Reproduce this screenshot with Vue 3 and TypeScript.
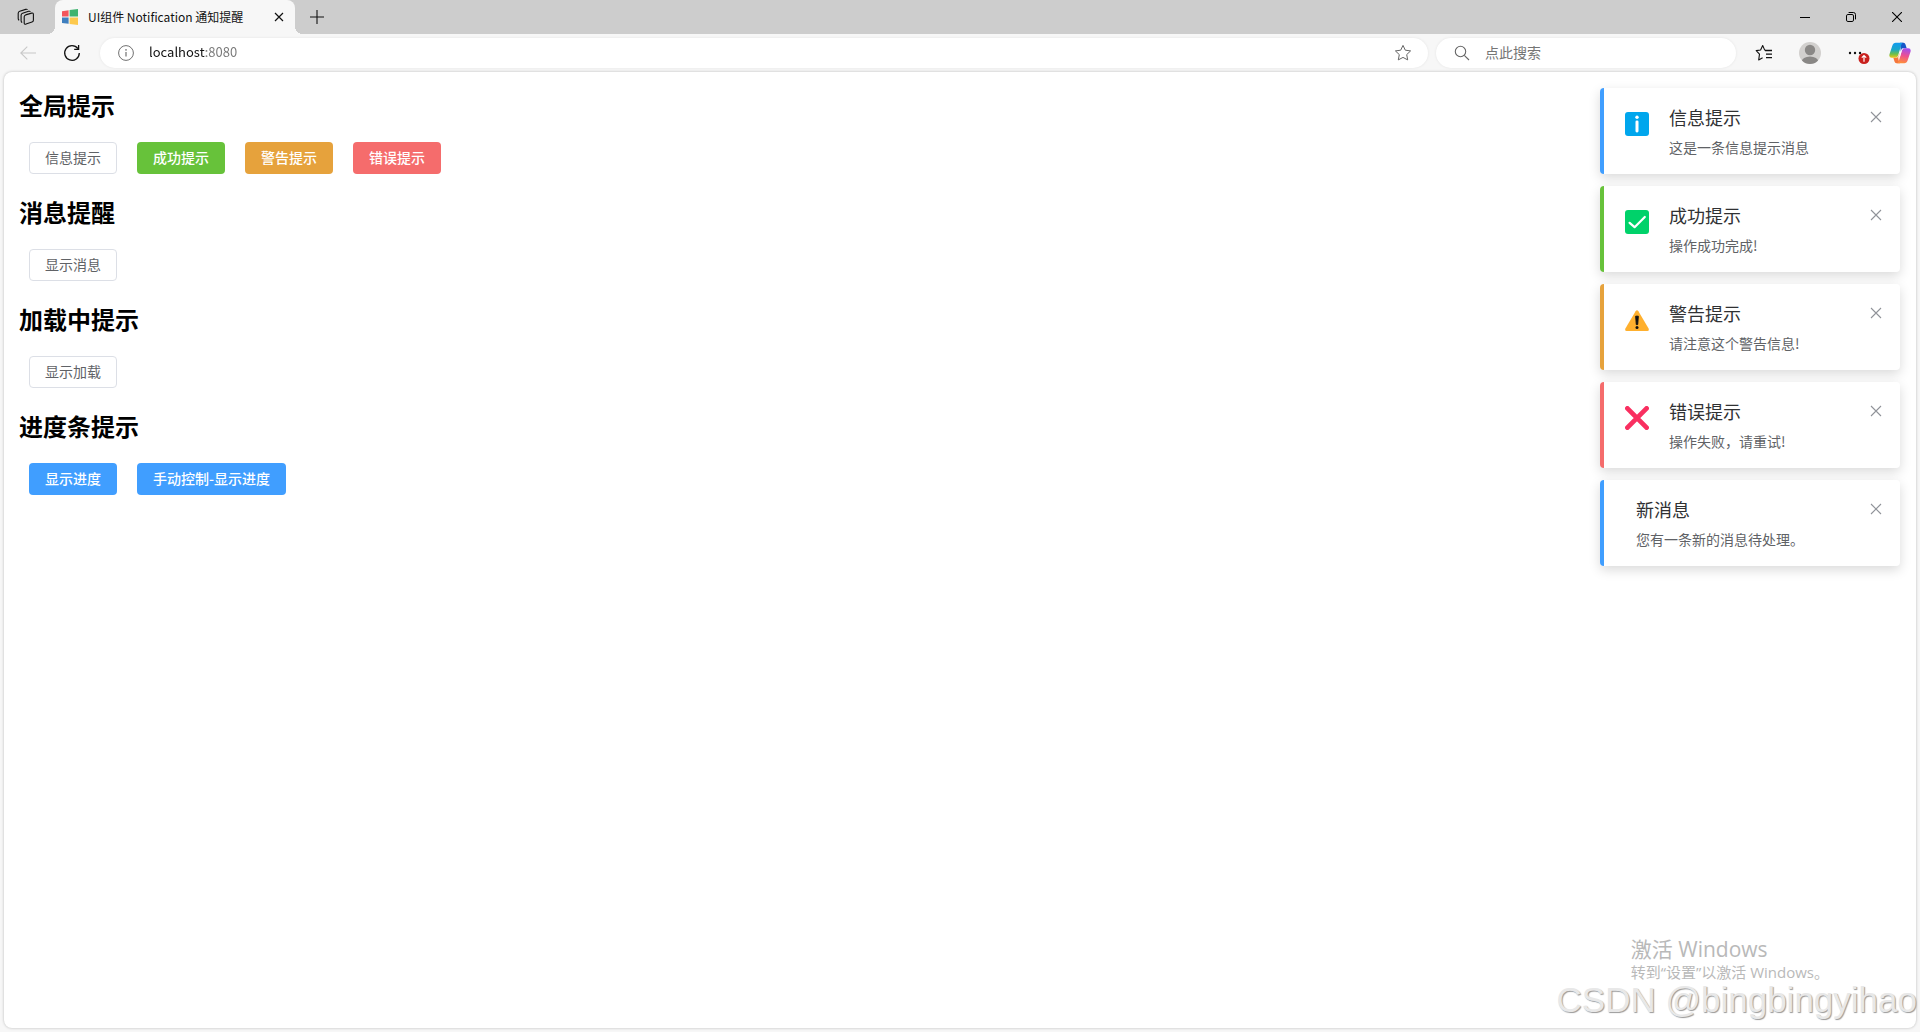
<script setup lang="ts">
import { ref } from 'vue'

type Kind = 'info' | 'success' | 'warning' | 'danger'

interface ActionButton {
  label: string
  kind: Kind | 'primary' | 'default'
}

interface Section {
  title: string
  buttons: ActionButton[]
}

interface Notice {
  id: number
  kind: Kind
  icon: boolean
  title: string
  message: string
}

const address = ref('localhost:8080')
const query = ref('')

const sections: Section[] = [
  {
    title: '全局提示',
    buttons: [
      { label: '信息提示', kind: 'default' },
      { label: '成功提示', kind: 'success' },
      { label: '警告提示', kind: 'warning' },
      { label: '错误提示', kind: 'danger' },
    ],
  },
  { title: '消息提醒', buttons: [{ label: '显示消息', kind: 'default' }] },
  { title: '加载中提示', buttons: [{ label: '显示加载', kind: 'default' }] },
  {
    title: '进度条提示',
    buttons: [
      { label: '显示进度', kind: 'primary' },
      { label: '手动控制-显示进度', kind: 'primary' },
    ],
  },
]

const notices = ref<Notice[]>([
  { id: 1, kind: 'info', icon: true, title: '信息提示', message: '这是一条信息提示消息' },
  { id: 2, kind: 'success', icon: true, title: '成功提示', message: '操作成功完成!' },
  { id: 3, kind: 'warning', icon: true, title: '警告提示', message: '请注意这个警告信息!' },
  { id: 4, kind: 'danger', icon: true, title: '错误提示', message: '操作失败，请重试!' },
  { id: 5, kind: 'info', icon: false, title: '新消息', message: '您有一条新的消息待处理。' },
])

function dismiss(id: number): void {
  notices.value = notices.value.filter((n) => n.id !== id)
}
</script>

<template>
  <div class="browser">
    <header class="tabstrip">
      <button class="icon-btn workspaces" aria-label="工作区">
        <svg width="18" height="18" viewBox="0 0 18 18" fill="none" stroke="#111" stroke-width="1.1" stroke-linejoin="round">
          <path d="M8.6 6.9 14.6 5.1Q16.4 4.7 16.4 6.4V12.2Q16.4 13.6 15 14.1L9 16.1Q7.2 16.6 7.2 14.9V8.8Q7.2 7.4 8.6 6.9Z" />
          <path d="M5.2 14.6Q4.1 14 4.1 12.7V7.3Q4.1 5.7 5.6 5.2L11.6 3.3Q12.8 3 13.5 3.6" />
          <path d="M2.2 12.3Q1.2 11.7 1.2 10.4V5.2Q1.2 3.7 2.7 3.2L8.7 1.4Q9.9 1.1 10.6 1.7" />
        </svg>
      </button>
      <div class="tab">
        <svg class="favicon" width="16" height="16" viewBox="0 0 16 16">
          <path d="M0 2.2 6.6 1.2V7.4H0Z" fill="#f2545b" />
          <path d="M7.6 1 16 0V7.4H7.6Z" fill="#3fb36f" />
          <path d="M0 8.4H6.6V14.8L0 13.9Z" fill="#3f7fbf" />
          <path d="M7.6 8.4H16V16L7.6 14.9Z" fill="#fdc94d" />
        </svg>
        <span class="tab-title">UI组件 Notification 通知提醒</span>
        <button class="icon-btn tab-close" aria-label="关闭标签页">
          <svg width="10" height="10" viewBox="0 0 10 10" stroke="#111" stroke-width="1.2"><path d="M1 1 9 9M9 1 1 9" /></svg>
        </button>
      </div>
      <button class="icon-btn new-tab" aria-label="新建标签页">
        <svg width="14" height="14" viewBox="0 0 14 14" stroke="#111" stroke-width="1.1"><path d="M7 0V14M0 7H14" /></svg>
      </button>
      <div class="window-controls">
        <button class="icon-btn" aria-label="最小化">
          <svg width="10" height="10" viewBox="0 0 10 10" stroke="#000"><path d="M0 5.5H10" /></svg>
        </button>
        <button class="icon-btn" aria-label="还原">
          <svg width="10" height="10" viewBox="0 0 10 10" fill="none" stroke="#000">
            <rect x=".5" y="2.5" width="7" height="7" rx="1.4" />
            <path d="M2.6 .5H7.4A2.1 2.1 0 0 1 9.5 2.6V7.4" />
          </svg>
        </button>
        <button class="icon-btn" aria-label="关闭">
          <svg width="10" height="10" viewBox="0 0 10 10" stroke="#000" stroke-width="1.1"><path d="M0 0 10 10M10 0 0 10" /></svg>
        </button>
      </div>
    </header>

    <nav class="toolbar">
      <button class="icon-btn back" aria-label="后退">
        <svg width="16" height="14" viewBox="0 0 16 14" fill="none" stroke="#c8c8c8" stroke-width="1.1"><path d="M16 7H1M7.3 .6.8 7l6.5 6.4" /></svg>
      </button>
      <button class="icon-btn reload" aria-label="刷新">
        <svg width="18" height="18" viewBox="0 0 18 18" fill="none" stroke="#111" stroke-width="1.3">
          <path d="M16.3 9A7.3 7.3 0 1 1 14.9 4.7" /><path d="M15.6 1V5.4H11.2" />
        </svg>
      </button>
      <div class="pill address">
        <svg width="16" height="16" viewBox="0 0 16 16" fill="none" stroke="#707070">
          <circle cx="8" cy="8" r="7.4" /><path d="M8 7V11.6" stroke-width="1.2" /><circle cx="8" cy="4.9" r=".8" fill="#707070" stroke="none" />
        </svg>
        <input v-model="address" class="address-input" type="text" aria-label="地址栏" />
        <button class="icon-btn" aria-label="收藏">
          <svg width="18" height="18" viewBox="0 0 18 18" fill="none" stroke="#666" stroke-linejoin="round">
            <path d="M9 1.4 11.3 6.2 16.6 6.9 12.7 10.6 13.7 15.9 9 13.4 4.3 15.9 5.3 10.6 1.4 6.9 6.7 6.2Z" />
          </svg>
        </button>
      </div>
      <div class="pill search">
        <svg width="16" height="16" viewBox="0 0 16 16" fill="none" stroke="#666" stroke-width="1.1">
          <circle cx="6.5" cy="6.5" r="5.2" /><path d="M10.3 10.3 15 15" />
        </svg>
        <input v-model="query" class="search-input" type="text" placeholder="点此搜索" aria-label="点此搜索" />
      </div>
      <div class="tools">
        <button class="icon-btn" aria-label="收藏夹">
          <svg width="18" height="18" viewBox="0 0 18 18" fill="none" stroke="#111" stroke-width="1.1" stroke-linejoin="round">
            <path d="M10.4 6.2 9.6 5.9 7.7 1.5 5.6 6 1.2 6.6 4.5 10.1 3.7 15.9 7.6 13.8" />
            <path d="M10 6.5H17M11 10.1H17M11 13.6H17" stroke-width="1.3" />
          </svg>
        </button>
        <button class="icon-btn" aria-label="个人资料">
          <svg width="24" height="24" viewBox="0 0 24 24">
            <defs><clipPath id="avatar-clip"><circle cx="12" cy="12" r="11" /></clipPath></defs>
            <circle cx="12" cy="12" r="11" fill="#d2d0ce" />
            <circle cx="12" cy="9" r="5.2" fill="#8a8886" />
            <ellipse cx="12" cy="21" rx="8.4" ry="5.6" fill="#8a8886" clip-path="url(#avatar-clip)" />
          </svg>
        </button>
        <button class="icon-btn" aria-label="设置及其他，有可用更新">
          <svg width="28" height="24" viewBox="0 0 28 24">
            <g fill="#111"><circle cx="8" cy="12" r="1.2" /><circle cx="13" cy="12" r="1.2" /><circle cx="18" cy="12" r="1.2" /></g>
            <circle cx="22" cy="17.5" r="5.5" fill="#c9211e" />
            <path d="M22 20.7V14.8M19.8 16.7 22 14.5 24.2 16.7" fill="none" stroke="#fff" stroke-width="1.2" />
          </svg>
        </button>
        <button class="icon-btn" aria-label="Copilot">
          <svg width="22" height="22" viewBox="0 0 22 22">
            <defs>
              <linearGradient id="cp-left" x1="0" y1="0" x2="0" y2="1">
                <stop offset="0" stop-color="#119bf0" /><stop offset=".45" stop-color="#1aa7c8" /><stop offset=".75" stop-color="#6cc04a" /><stop offset="1" stop-color="#f5c518" />
              </linearGradient>
              <linearGradient id="cp-right" x1=".6" y1="0" x2=".4" y2="1">
                <stop offset="0" stop-color="#a04df0" /><stop offset=".5" stop-color="#ee5090" /><stop offset="1" stop-color="#ff8f3a" />
              </linearGradient>
            </defs>
            <path d="M11 .8H14.6Q16 .8 16.5 2.4L17.7 6.2H14.7Q13 6.2 12.4 8L11.8 9.8Z" fill="#1556c8" />
            <path d="M11 21.2H7.4Q6 21.2 5.5 19.6L4.3 15.8H7.3Q9 15.8 9.6 14L10.6 11Z" fill="#f5773c" />
            <path d="M6.8.8H14.3Q12.9.8 12.2 3L9.1 13.5Q8.4 15.8 6.4 15.8H2.8Q-.4 15.8.5 12.2L3.3 3.8Q4.2.8 6.8.8Z" fill="url(#cp-left)" />
            <path d="M15.2 21.2H7.7Q9.1 21.2 9.8 19L12.9 8.5Q13.6 6.2 15.6 6.2H19.2Q22.4 6.2 21.5 9.8L18.7 18.2Q17.8 21.2 15.2 21.2Z" fill="url(#cp-right)" />
            <path d="M12.9 6.4H14.6Q13.4 6.9 12.9 8.5L9.8 19 9.1 15.6Z" fill="#fff" opacity=".85" />
          </svg>
        </button>
      </div>
    </nav>

    <main class="page">
      <section v-for="section in sections" :key="section.title" class="section">
        <h2>{{ section.title }}</h2>
        <div class="actions">
          <button v-for="b in section.buttons" :key="b.label" class="btn" :class="'btn-' + b.kind">{{ b.label }}</button>
        </div>
      </section>

      <aside class="notices">
        <article v-for="n in notices" :key="n.id" class="notice" :class="'notice-' + n.kind">
          <svg v-if="n.icon" class="notice-icon" width="24" height="24" viewBox="0 0 24 24">
            <template v-if="n.kind === 'info'">
              <rect width="24" height="24" rx="3" fill="#00a6ed" />
              <circle cx="12" cy="5.2" r="1.7" fill="#fff" />
              <rect x="10.5" y="8.4" width="3" height="12" rx="1.3" fill="#fff" />
            </template>
            <template v-else-if="n.kind === 'success'">
              <rect width="24" height="24" rx="3" fill="#00d26a" />
              <path d="M4.6 12.8 9.6 17.2 19.8 7" fill="none" stroke="#fff" stroke-width="2.2" stroke-linecap="round" stroke-linejoin="round" />
            </template>
            <template v-else-if="n.kind === 'warning'">
              <path d="M10.6 3.2Q12 1.2 13.4 3.2L23.6 20.6Q24.4 22.8 22.4 23H1.6Q-.4 22.8.4 20.6Z" fill="#ffb02e" />
              <path d="M10.7 8.2H13.3L12.7 16.6H11.3Z" fill="#111" stroke="#111" stroke-linejoin="round" />
              <circle cx="12" cy="19.6" r="1.5" fill="#111" />
            </template>
            <path v-else d="M2.4 2.4 21.6 21.6M21.6 2.4 2.4 21.6" stroke="#f92f60" stroke-width="4.8" stroke-linecap="round" />
          </svg>
          <div class="notice-body">
            <h3>{{ n.title }}</h3>
            <p>{{ n.message }}</p>
          </div>
          <button class="icon-btn notice-close" aria-label="关闭提示" @click="dismiss(n.id)">
            <svg width="12" height="12" viewBox="0 0 12 12" stroke="#909399" stroke-width="1.1"><path d="M1 1 11 11M11 1 1 11" /></svg>
          </button>
        </article>
      </aside>
    </main>

    <div class="activation">
      <div class="activation-title">激活 Windows</div>
      <div class="activation-text">转到“设置”以激活 Windows。</div>
    </div>
    <div class="credit">CSDN @bingbingyihao</div>
  </div>
</template>

<style>
body {
  margin: 0;
}
</style>

<style scoped>
.browser {
  position: relative;
  display: flex;
  flex-direction: column;
  min-height: 100vh;
  background: #f7f7f7;
  overflow: hidden;
  font-family: 'Noto Sans CJK SC', sans-serif;
  box-sizing: border-box;
}

.icon-btn {
  display: flex;
  align-items: center;
  justify-content: center;
  padding: 0;
  border: 0;
  background: none;
}

.icon-btn svg {
  flex: none;
}

.tabstrip {
  display: flex;
  align-items: stretch;
  height: 34px;
  background: #cdcdcd;
}

.workspaces {
  width: 55px;
  padding-right: 3px;
}

.tab {
  position: relative;
  display: flex;
  align-items: center;
  width: 240px;
  box-sizing: border-box;
  padding: 0 8px 0 7px;
  border-radius: 8px 8px 0 0;
  background: #f7f7f7;
}

.tab::before,
.tab::after {
  content: '';
  position: absolute;
  bottom: 0;
  width: 8px;
  height: 8px;
}

.tab::before {
  right: 100%;
  background: radial-gradient(circle at 0 0, transparent 8px, #f7f7f7 8px);
}

.tab::after {
  left: 100%;
  background: radial-gradient(circle at 100% 0, transparent 8px, #f7f7f7 8px);
}

.tab-title {
  flex: 1;
  margin-left: 10px;
  padding-bottom: 1px;
  font-size: 12px;
  line-height: 16px;
  color: #111;
  white-space: nowrap;
}

.tab-close {
  width: 16px;
  height: 24px;
}

.new-tab {
  width: 43px;
}

.window-controls {
  display: flex;
  margin-left: auto;
}

.window-controls .icon-btn {
  width: 46px;
}

.toolbar {
  display: flex;
  align-items: center;
  height: 38px;
}

.back {
  width: 56px;
}

.reload {
  width: 32px;
  margin-right: 12px;
}

.pill {
  display: flex;
  align-items: center;
  height: 30px;
  box-sizing: border-box;
  border-radius: 15px;
  background: #fff;
  box-shadow: 0 0 3px rgba(0, 0, 0, 0.08);
}

.address {
  flex: 1;
  padding: 0 16px 0 18px;
}

.search {
  width: 300px;
  margin-left: 8px;
  padding: 0 18px;
}

.pill input {
  flex: 1;
  min-width: 0;
  padding: 0 0 2px;
  border: 0;
  outline: 0;
  background: none;
  font-family: inherit;
  font-size: 14px;
  line-height: 20px;
}

/* The host name is darker than the port. */
.pill .address-input {
  margin-left: 15px;
  font-size: 13px;
  color: transparent;
  background: linear-gradient(90deg, #111 57px, #767676 57px);
  background-clip: text;
}

.pill .search-input {
  margin-left: 15px;
}

.search-input::placeholder {
  color: #757575;
}

.tools {
  display: flex;
  align-items: center;
  margin-left: 5px;
}

.tools .icon-btn {
  width: 46px;
}

.tools .icon-btn:last-child {
  width: 41px;
}

.page {
  position: relative;
  flex: 1;
  margin: 0 4px 4px;
  padding: 15px;
  border-radius: 8px;
  background: #fff;
  box-shadow: 0 0 3px rgba(0, 0, 0, 0.25);
}

.section {
  margin-bottom: 20px;
}

h2 {
  margin: 0 0 20px;
  font-size: 24px;
  font-weight: 700;
  line-height: 35px;
  color: #000;
}

.actions {
  display: flex;
  gap: 20px;
  padding: 0 10px;
}

.btn {
  height: 32px;
  padding: 0 15px 2px;
  border: 1px solid transparent;
  border-radius: 4px;
  font-family: inherit;
  font-size: 14px;
  font-weight: 500;
  line-height: 20px;
  color: #fff;
}

.btn-default {
  border-color: #dcdfe6;
  background: #fff;
  color: #606266;
  font-weight: 400;
}

.btn-primary {
  background: #409eff;
}

.btn-success {
  background: #67c23a;
}

.btn-warning {
  background: #e6a23c;
}

.btn-danger {
  background: #f56c6c;
}

.notices {
  position: absolute;
  top: 16px;
  right: 16px;
  display: flex;
  flex-direction: column;
  gap: 12px;
  width: 300px;
}

.notice {
  display: flex;
  align-items: flex-start;
  height: 86px;
  box-sizing: border-box;
  padding: 15px 18px 15px 20px;
  border-left: 4px solid #409eff;
  border-radius: 4px;
  background: #fff;
  box-shadow: 0 4px 12px rgba(0, 0, 0, 0.15);
}

.notice-success {
  border-left-color: #67c23a;
}

.notice-warning {
  border-left-color: #e6a23c;
}

.notice-danger {
  border-left-color: #f56c6c;
}

.notice-icon {
  flex: none;
  margin: 9px 8px 0 1px;
}

.notice-body {
  flex: 1;
  padding-left: 12px;
}

.notice h3 {
  margin: 0 0 4px;
  font-size: 18px;
  font-weight: 400;
  line-height: 28px;
  color: #303133;
}

.notice p {
  margin: 0;
  font-size: 14px;
  line-height: 24px;
  color: #606266;
}

.notice-close {
  width: 12px;
  height: 12px;
  margin-top: 8px;
}

.activation {
  position: absolute;
  right: 91px;
  bottom: 49px;
  color: #b9b9b9;
  font-family: 'Open Sans', 'Noto Sans CJK SC', sans-serif;
  white-space: nowrap;
}

.activation-title {
  font-size: 21px;
  line-height: 24px;
}

.activation-text {
  font-size: 15px;
  line-height: 22px;
}

.credit {
  position: absolute;
  right: 3px;
  bottom: 12px;
  font-family: 'Liberation Sans', sans-serif;
  font-size: 35px;
  line-height: 40px;
  color: #e8e8e8;
  text-shadow: 1px 1px 1px #999;
  white-space: nowrap;
}
</style>
